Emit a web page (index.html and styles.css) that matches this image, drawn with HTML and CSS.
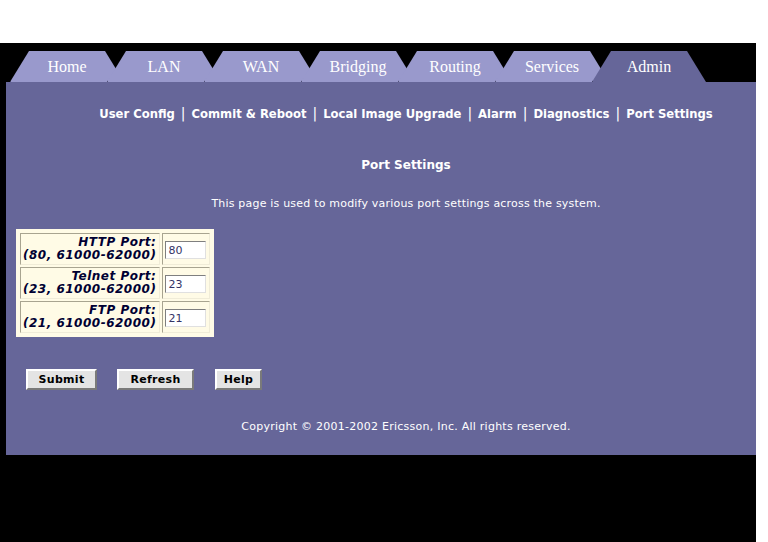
FILE: index.html
```html
<!DOCTYPE html>
<html lang="en">
  <head>
    <meta charset="UTF-8" />
    <title>Port Settings</title>
    <link rel="stylesheet" href="styles.css">
  </head>
  <body>
    <div class="frame">
      <!-- Top tab bar -->
      <ul class="tabs">
        <li class="tab">Home</li>
        <li class="tab">LAN</li>
        <li class="tab">WAN</li>
        <li class="tab">Bridging</li>
        <li class="tab">Routing</li>
        <li class="tab">Services</li>
        <li class="tab active">Admin</li>
      </ul>

      <div class="panel">
        <div class="subnav">
          <a href="#">User Config</a><span class="sep">|</span><a href="#">Commit &amp; Reboot</a><span class="sep">|</span><a href="#">Local Image Upgrade</a><span class="sep">|</span><a href="#">Alarm</a><span class="sep">|</span><a href="#">Diagnostics</a><span class="sep">|</span><a href="#">Port Settings</a>
        </div>

        <h1 class="title">Port Settings</h1>
        <p class="desc">This page is used to modify various port settings across the system.</p>

        <form class="ports">
          <table class="port-table">
            <tr>
              <td class="label">HTTP Port:<br>(80, 61000-62000)</td>
              <td class="field"><input type="text" value="80"></td>
            </tr>
            <tr>
              <td class="label">Telnet Port:<br>(23, 61000-62000)</td>
              <td class="field"><input type="text" value="23"></td>
            </tr>
            <tr>
              <td class="label">FTP Port:<br>(21, 61000-62000)</td>
              <td class="field"><input type="text" value="21"></td>
            </tr>
          </table>

          <div class="buttons">
            <button type="button" class="btn btn-submit">Submit</button>
            <button type="button" class="btn btn-refresh">Refresh</button>
            <button type="button" class="btn btn-help">Help</button>
          </div>
        </form>

        <p class="copyright">Copyright &copy; 2001-2002 Ericsson, Inc. All rights reserved.</p>
      </div>
    </div>
  </body>
</html>
```

FILE: styles.css
```css
body {
  margin: 0;
  padding: 0;
  background-color: #ffffff;
  font-family: 'DejaVu Sans', Verdana, sans-serif;
}

/* Black frame behind everything */
.frame {
  margin-top: 43px;
  width: 756px;
  height: 499px;
  background-color: #000000;
  padding-top: 8px;
  box-sizing: border-box;
}

/* Tabs */
.tabs {
  display: flex;
  list-style: none;
  margin: 0;
  padding: 0 0 0 10px;
  height: 31px;
}

.tab {
  width: 114px;
  height: 31px;
  margin-right: -17px;
  box-sizing: border-box;
  background-color: #9999cc;
  color: #ffffff;
  font-family: 'Liberation Serif', 'Times New Roman', serif;
  font-size: 16px;
  line-height: 31px;
  text-align: center;
  clip-path: polygon(0 100%, 19px 0, 95px 0, 114px 100%);
  box-shadow: inset 1px 0 0 #333355;
}

.tab.active {
  background-color: #666699;
}

/* Main purple panel */
.panel {
  margin-left: 6px;
  width: 750px;
  height: 373px;
  background-color: #666699;
  color: #ffffff;
  padding-top: 22px;
  box-sizing: border-box;
}

.subnav,
.title,
.desc,
.copyright {
  padding-left: 50px;
  text-align: center;
}

.subnav {
  font-size: 11.6px;
  font-weight: bold;
  height: 18px;
  line-height: 18px;
}

.subnav a {
  color: #ffffff;
  text-decoration: none;
}

.subnav .sep {
  margin: 0 6px;
  font-weight: normal;
  font-size: 14px;
}

.title {
  margin: 35px 0 0;
  font-size: 12px;
  font-weight: bold;
  line-height: 16px;
}

.desc {
  margin: 24px 0 0;
  font-size: 11px;
  line-height: 14px;
  letter-spacing: 0.2px;
}

/* Port form */
.ports {
  margin: 0;
  padding-left: 10px;
}

.port-table {
  margin-top: 18px;
  background-color: #fffbe6;
  border-spacing: 2px;
  padding: 2px;
}

.port-table td {
  border: 1px solid #c8c4a8;
  border-right-color: #f0ecd8;
  border-bottom-color: #f0ecd8;
  border-top-color: #a8a490;
  border-left-color: #a8a490;
  height: 30px;
  padding: 0 1px 0 2px;
}

.port-table .label {
  padding-right: 3px;
  text-align: right;
  white-space: nowrap;
  font-size: 12px;
  font-weight: bold;
  font-style: italic;
  letter-spacing: 0.5px;
  line-height: 13px;
  color: #000033;
}

.port-table .field {
  width: 43px;
}

.port-table input {
  width: 41px;
  height: 18px;
  box-sizing: border-box;
  border: 1px solid #7f7f7f;
  border-right-color: #e0e0e0;
  border-bottom-color: #e0e0e0;
  padding: 0 2px;
  font-family: 'DejaVu Sans', Verdana, sans-serif;
  font-size: 11px;
  color: #333366;
  background: #ffffff;
}

.buttons {
  display: flex;
  margin-top: 32px;
  padding-left: 10px;
}

.btn {
  height: 21px;
  padding: 0;
  font-family: 'DejaVu Sans', Verdana, sans-serif;
  font-size: 11px;
  font-weight: bold;
  letter-spacing: 0.3px;
  color: #000000;
  background-color: #e4e4e4;
  border: 2px solid;
  border-color: #ffffff #7a7a7a #7a7a7a #ffffff;
}

.btn-submit {
  width: 71px;
}

.btn-refresh {
  width: 77px;
  margin-left: 20px;
}

.btn-help {
  width: 47px;
  margin-left: 21px;
}

.copyright {
  margin: 30px 0 0;
  font-size: 11px;
  line-height: 14px;
  letter-spacing: 0.25px;
}
```
